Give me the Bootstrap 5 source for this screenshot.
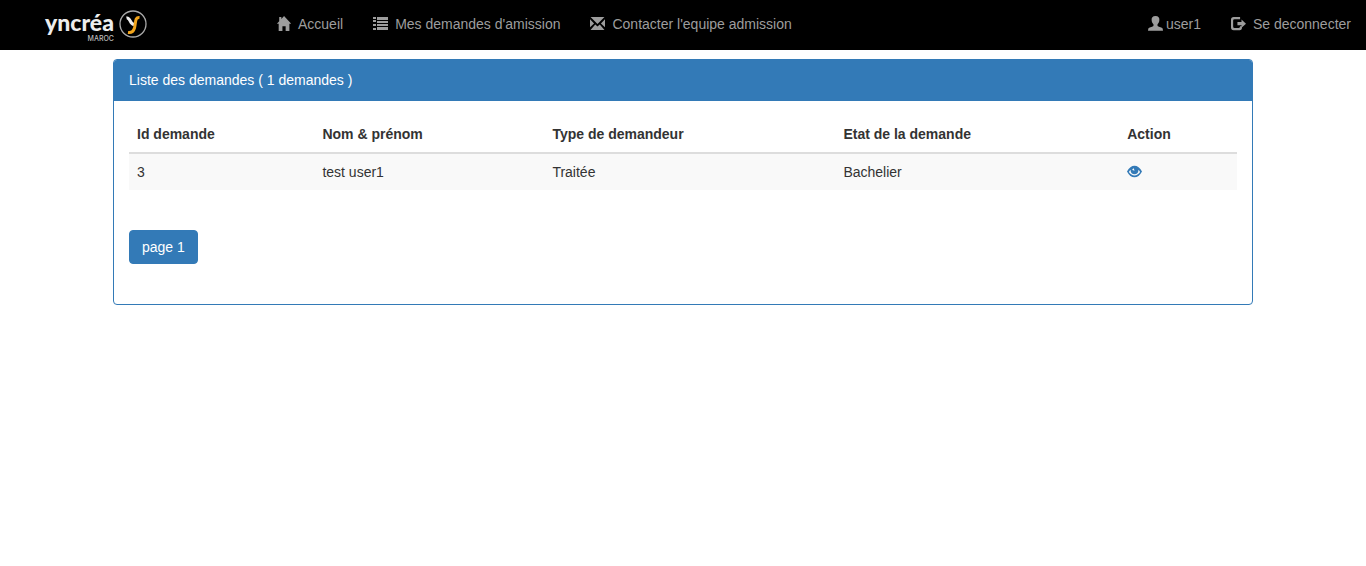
<!DOCTYPE html>
<html lang="fr">
<head>
<meta charset="utf-8">
<meta name="viewport" content="width=device-width, initial-scale=1">
<title>Liste des demandes</title>
<link rel="stylesheet" href="https://cdn.jsdelivr.net/npm/bootstrap@5.3.0/dist/css/bootstrap.min.css">
<style>
  body {
    font-family: "Liberation Sans", Arial, sans-serif;
    font-size: 14px;
    line-height: 20px;
    color: #333;
  }
  .topbar { background: #000; min-height: 50px; }
  .topbar .nav-link {
    display: flex;
    align-items: center;
    gap: 7px;
    padding: 14px 15px 16px;
    color: #9d9d9d;
    white-space: nowrap;
  }
  .topbar .nav-link:hover { color: #fff; }
  .topbar .user-link { gap: 3px; }
  .glyph { width: 15px; height: 15px; fill: currentColor; flex: none; }
  .topbar .glyph { margin-bottom: 2px; }
  .brand-box { width: 261px; padding: 9px 0 0 45px; color: #ededed; }
  .brand-box a { color: inherit; text-decoration: none; gap: 4px; }
  .brand-name {
    font: 900 23px/26px Lato, sans-serif;
    display: block;
  }
  .brand-place {
    font: 500 7px/8px Inter, sans-serif;
    color: #bbb;
    text-align: right;
    display: block;
  }
  .page { max-width: 1170px; padding: 9px 15px; }
  .panel { --bs-card-border-color: #337ab7; --bs-card-border-radius: 4px; --bs-card-inner-border-radius: 3px; color: #333; }
  .panel .card-header { background: #337ab7; color: #fff; padding: 10px 15px; }
  .panel .card-body { padding: 15px 15px 40px; }
  .requests { color: #333; margin-bottom: 40px; --bs-table-striped-bg: #f9f9f9; --bs-table-striped-color: #333; }
  .requests th, .requests td { padding: 8px; border: 0; }
  .requests thead th { border-bottom: 2px solid #ddd; }
  .requests a { color: #337ab7; }
  .requests .glyph { display: block; margin: 2px 0 3px; }
  .btn-page {
    --bs-btn-bg: #337ab7; --bs-btn-border-color: #337ab7; --bs-btn-color: #fff;
    --bs-btn-hover-bg: #286090; --bs-btn-hover-color: #fff;
    --bs-btn-font-size: 14px; --bs-btn-line-height: 20px;
    --bs-btn-padding-x: 12px; --bs-btn-padding-y: 6px; --bs-btn-border-radius: 4px;
  }
</style>
</head>
<body>
<nav class="topbar d-flex flex-wrap" aria-label="Navigation principale">
  <div class="brand-box">
    <a href="#" class="d-inline-flex align-items-start">
      <span><span class="brand-name">yncréa</span><span class="brand-place">MAROC</span></span>
      <svg width="30" height="30" viewBox="0 0 30 30" fill="none" aria-hidden="true">
        <circle cx="15" cy="15" r="13" stroke="#aaa" stroke-width="1.3"/>
        <path d="M8.500 9C12.500 8 11.500 15 16 15.500" stroke="#eee" stroke-width="3"/>
        <path d="M21.500 8.500C16.500 8 18 14 16.500 19C15.500 22.500 13.500 24 10 23.500" stroke="#f2a51c" stroke-width="3"/>
      </svg>
    </a>
  </div>
  <ul class="nav">
    <li class="nav-item"><a class="nav-link" href="#">
      <svg class="glyph" viewBox="0 0 14 14" aria-hidden="true"><path d="M7.500 0L14.200 7.300H12.500V14H9V9.500H6V14H2.500V7.300H0.800L3 4.900V1H5V2.700Z"/></svg>Accueil</a></li>
    <li class="nav-item"><a class="nav-link" href="#">
      <svg class="glyph" viewBox="0 0 15 15" aria-hidden="true"><path d="M0 1h3v2H0zM4 1h11v3H4zM0 4h3v2H0zM4 5h11v2H4zM0 8h3v2H0zM4 8h11v2H4zM0 12h3v2H0zM4 11h11v3H4z"/></svg>Mes demandes d'amission</a></li>
    <li class="nav-item"><a class="nav-link" href="#">
      <svg class="glyph" viewBox="0 0 14 14" aria-hidden="true"><path d="M0.500 1H13.500L7 7.500ZM0 3L3.800 7L0 10.500ZM14 3V10.500L10.200 7ZM4.900 8L7 9.700L9.100 8L13.500 13H0.500Z"/></svg>Contacter l'equipe admission</a></li>
  </ul>
  <ul class="nav ms-auto">
    <li class="nav-item"><a class="nav-link user-link" href="#">
      <svg class="glyph" viewBox="0 0 14 14" aria-hidden="true"><path d="M7 0C9.700 0 10.900 1.700 10.600 4C10.400 6 9.700 7 8.900 7.800V9.300C10.500 10.300 13 10.600 13.700 11.700L14 13.800H0L0.300 11.700C1 10.600 3.500 10.300 5.100 9.300V7.800C4.300 7 3.600 6 3.400 4C3.100 1.700 4.300 0 7 0Z"/></svg>user1</a></li>
    <li class="nav-item"><a class="nav-link" href="#">
      <svg class="glyph" viewBox="0 0 14 14" aria-hidden="true"><path d="M8.500 1V3H3.300Q2 3 2 4.300V9.700Q2 11.200 3.300 11.200H7.200Q8.500 11.200 8.500 9.500H10.300V10.500Q10.300 13.200 8 13.200H2.500Q0 13.200 0 10.500V3.500Q0 1 2.500 1ZM9.800 3.200L14 7.200L9.800 11V8.700H6V5.500H9.800Z"/></svg>Se deconnecter</a></li>
  </ul>
</nav>

<main class="container-fluid page">
  <section class="card panel">
    <div class="card-header">Liste des demandes ( 1 demandes )</div>
    <div class="card-body">
      <div class="table-responsive">
        <table class="table table-striped requests">
          <thead>
            <tr><th scope="col">Id demande</th><th scope="col">Nom &amp; prénom</th><th scope="col">Type de demandeur</th><th scope="col">Etat de la demande</th><th scope="col">Action</th></tr>
          </thead>
          <tbody>
            <tr><td>3</td><td>test user1</td><td>Traitée</td><td>Bachelier</td><td><a href="#" class="d-inline-block align-top" aria-label="Voir la demande">
              <svg class="glyph" viewBox="0 0 14 14" aria-hidden="true"><path fill-rule="evenodd" d="M0 7C3.600-0.300 10.400-0.300 14 7C10.400 14.300 3.600 14.300 0 7ZM1.800 7.500C4.500 11.800 9.500 11.800 12.200 7.500C11.800 6.600 11.300 6 10.600 5.400C10.900 7.800 9.300 9.500 7 9.500C4.700 9.500 3.100 7.800 3.400 5.400C2.700 6 2.200 6.600 1.800 7.500ZM5 5.600L7 6.400L6.400 4.300C5.500 4.300 5 4.900 5 5.600Z"/></svg></a></td></tr>
          </tbody>
        </table>
      </div>
      <a href="#" class="btn btn-page">page 1</a>
    </div>
  </section>
</main>
<script src="https://cdn.jsdelivr.net/npm/bootstrap@5.3.0/dist/js/bootstrap.bundle.min.js"></script>
</body>
</html>
